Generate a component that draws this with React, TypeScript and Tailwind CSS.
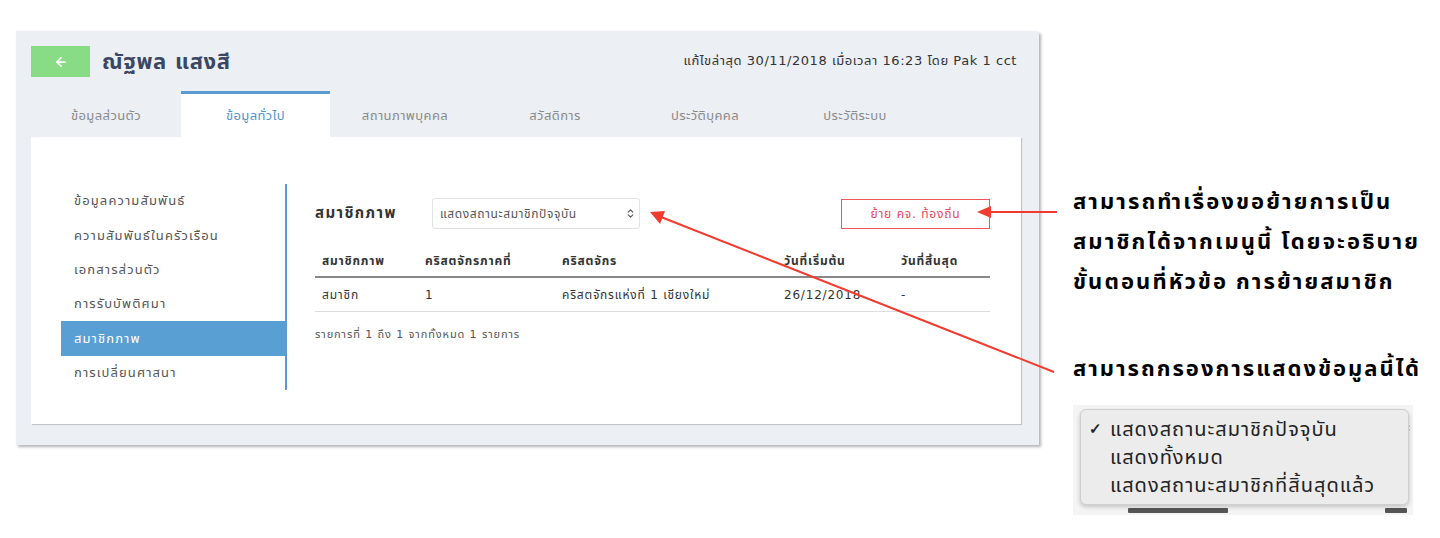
import { ArrowLeft, ChevronsUpDown } from 'lucide-react';

export default function App() {
  const tabs = ["ข้อมูลส่วนตัว", "ข้อมูลทั่วไป", "สถานภาพบุคคล", "สวัสดิการ", "ประวัติบุคคล", "ประวัติระบบ"];
  const menu = [
    "ข้อมูลความสัมพันธ์",
    "ความสัมพันธ์ในครัวเรือน",
    "เอกสารส่วนตัว",
    "การรับบัพติศมา",
    "สมาชิกภาพ",
    "การเปลี่ยนศาสนา",
  ];
  const cols = [
    { head: "สมาชิกภาพ", cell: "สมาชิก", w: "w-[103px]" },
    { head: "คริสตจักรภาคที่", cell: "1", w: "w-[137px]" },
    { head: "คริสตจักร", cell: "คริสตจักรแห่งที่ 1 เชียงใหม่", w: "w-[222px]" },
    { head: "วันที่เริ่มต้น", cell: "26/12/2018", w: "w-[117px]" },
    { head: "วันที่สิ้นสุด", cell: "-", w: "flex-1" },
  ];

  return (
    <div className="relative w-[1440px] h-[538px] bg-white overflow-hidden font-['DejaVu_Sans','Noto_Sans_Thai','Noto_Sans',sans-serif]">
      <div className="flex">
        {/* Main card */}
        <div className="ml-[16px] mt-[31px] w-[1023px] h-[414px] bg-[#eceff4] shadow-[2px_2px_3px_rgba(0,0,0,0.3)] rounded-tr-[3px]">
          {/* header */}
          <div className="flex items-center h-[31px] mt-[15px] pl-[15px] pr-[22px]">
            <div className="w-[59px] h-[31px] bg-[#88dc86] flex items-center justify-center">
              <ArrowLeft size={14} strokeWidth={3} className="text-white" />
            </div>
            <div className="ml-[12px] text-[22px] font-bold text-[#3b4762] leading-none tracking-[0.6px]">ณัฐพล แสงสี</div>
            <div className="ml-auto text-[13px] text-[#333] -mt-[2px] tracking-[0.55px]">แก้ไขล่าสุด 30/11/2018 เมื่อเวลา 16:23 โดย Pak 1 cct</div>
          </div>

          {/* tabs */}
          <div className="flex mt-[14px] pl-[15px]">
            {tabs.map((t, i) => (
              <div
                key={t}
                className={
                  i === 1
                    ? "w-[149px] h-[46px] bg-white border-t-[3px] border-[#5b9bd1] flex items-center justify-center text-[13px] tracking-[0.4px] text-[#4f93cf]"
                    : "w-[150px] h-[46px] flex items-center justify-center text-[13px] tracking-[0.4px] text-[#8a8a8a] pt-[3px]"
                }
              >
                {t}
              </div>
            ))}
          </div>

          {/* panel */}
          <div className="ml-[15px] w-[990px] h-[287px] bg-white shadow-[1px_1px_1px_rgba(0,0,0,0.18)] flex pl-[30px] pt-[47px]">
            {/* side menu */}
            <div className="w-[226px] h-[206px] border-r-2 border-[#5b9bd1] flex flex-col">
              {menu.map((m, i) => (
                <div
                  key={m}
                  className={
                    i === 4
                      ? "h-[34.4px] flex items-center pl-[13px] text-[13px] tracking-[1.1px] bg-[#5a9fd4] text-white"
                      : "h-[34.4px] flex items-center pl-[13px] text-[13px] tracking-[1.1px] text-[#555]"
                  }
                >
                  {m}
                </div>
              ))}
            </div>

            {/* content */}
            <div className="ml-[28px] w-[675px] pt-[14px]">
              <div className="flex items-center h-[31px]">
                <div className="w-[117px] text-[15px] font-bold text-[#333] tracking-[1.4px]">สมาชิกภาพ</div>
                <div className="w-[208px] h-[31px] border border-[#e3e3e3] rounded-[3px] flex items-center pl-[7px] pr-[3px] text-[12px] tracking-[0.6px] text-[#555]">
                  <span>แสดงสถานะสมาชิกปัจจุบัน</span>
                  <ChevronsUpDown size={11} strokeWidth={2.5} className="ml-auto text-[#555]" />
                </div>
                <div className="ml-auto w-[149px] h-[30px] border border-[#f0565c] flex items-center justify-center text-[12px] tracking-[0.8px] text-[#e8475a]">
                  ย้าย คจ. ท้องถิ่น
                </div>
              </div>

              <div className="mt-[17px] flex h-[32px] items-center border-b-2 border-[#888] text-[12px] font-bold text-[#333] tracking-[0.8px]">
                {cols.map((c) => (
                  <div key={c.head} className={`${c.w} pl-[7px]`}>{c.head}</div>
                ))}
              </div>
              <div className="flex h-[34px] items-center border-b border-[#ddd] text-[12px] text-[#333] tracking-[0.8px]">
                {cols.map((c) => (
                  <div key={c.head} className={`${c.w} pl-[7px]`}>{c.cell}</div>
                ))}
              </div>
              <div className="mt-[15px] text-[11px] text-[#555] tracking-[0.9px]">รายการที่ 1 ถึง 1 จากทั้งหมด 1 รายการ</div>
            </div>
          </div>
        </div>

        {/* annotations */}
        <div className="ml-[34px] pt-[183px] text-black font-['Noto_Sans_Thai','Noto_Sans',sans-serif]">
          <div className="text-[22px] font-bold leading-[40px] tracking-[2.1px] whitespace-nowrap">
            <div>สามารถทำเรื่องขอย้ายการเป็น</div>
            <div>สมาชิกได้จากเมนูนี้ โดยจะอธิบาย</div>
            <div>ขั้นตอนที่หัวข้อ การย้ายสมาชิก</div>
          </div>
          <div className="mt-[47px] text-[22px] font-bold leading-[40px] tracking-[2px] whitespace-nowrap">สามารถกรองการแสดงข้อมูลนี้ได้</div>
          <div className="mt-[15px] w-[340px] h-[110px] bg-[#f4f4f4] relative overflow-hidden">
            <div className="absolute right-[0px] top-[16px] text-[#888]">
              <ChevronsUpDown size={14} strokeWidth={2.5} />
            </div>
            <div className="absolute left-[55px] bottom-[2px] w-[100px] h-[5px] bg-[#555] rounded-[1px]" />
            <div className="absolute right-[6px] bottom-[2px] w-[22px] h-[5px] bg-[#555] rounded-[1px]" />
            <div className="absolute left-[7px] top-[4px] w-[329px] h-[96px] rounded-[6px] border border-[#cfcfcf] bg-[#ececec] shadow-[0_2px_4px_rgba(0,0,0,0.2)] pl-[8px] pt-[6px] text-[20px] leading-[28px] text-[#222] tracking-[1px]">
              <div className="flex">
                <span className="w-[21px] text-[15px] font-bold tracking-normal">✓</span>
                <span>แสดงสถานะสมาชิกปัจจุบัน</span>
              </div>
              <div className="pl-[21px]">แสดงทั้งหมด</div>
              <div className="pl-[21px] whitespace-nowrap">แสดงสถานะสมาชิกที่สิ้นสุดแล้ว</div>
            </div>
          </div>
        </div>
      </div>

      {/* arrows */}
      <svg className="absolute inset-0 pointer-events-none" width="1440" height="538">
        <line x1="1057" y1="212" x2="988" y2="212" stroke="#f23b2f" strokeWidth="2" />
        <polygon points="977,212 991,206 991,218" fill="#f23b2f" />
        <line x1="1054" y1="372" x2="661" y2="217" stroke="#f23b2f" strokeWidth="2" />
        <polygon points="650,212 665,211 660,224" fill="#f23b2f" />
      </svg>
    </div>
  );
}
